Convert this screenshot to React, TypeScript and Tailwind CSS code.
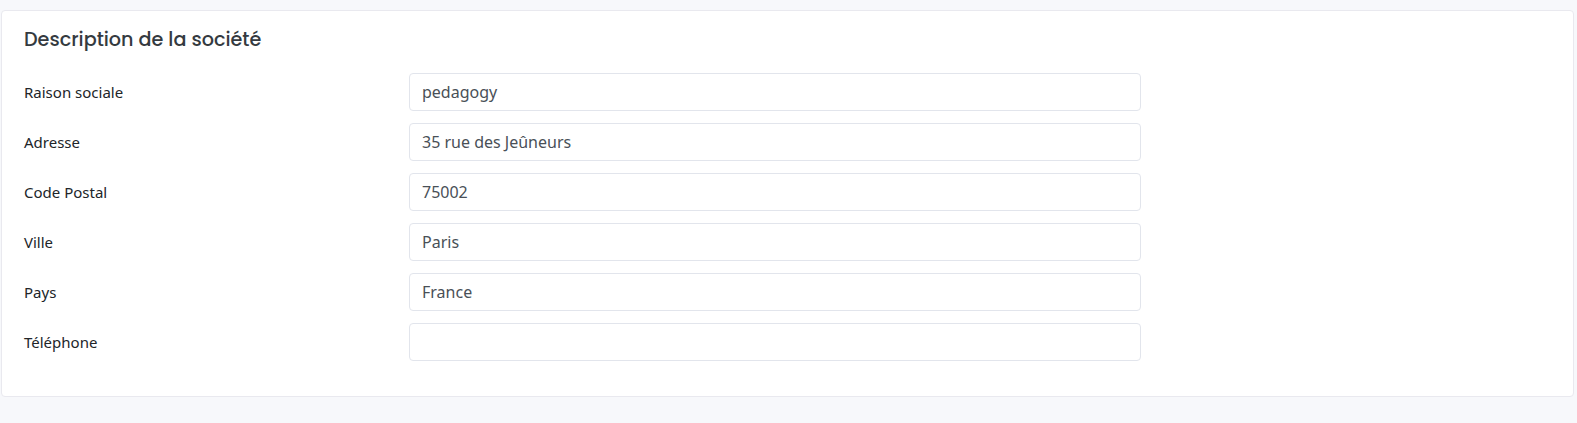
import React from "react";

const rows: [string, string][] = [
  ["Raison sociale", "pedagogy"],
  ["Adresse", "35 rue des Jeûneurs"],
  ["Code Postal", "75002"],
  ["Ville", "Paris"],
  ["Pays", "France"],
  ["Téléphone", ""],
];

export default function App() {
  return (
    <div className="w-[1577px] h-[423px] bg-[#f7f8fb] pt-[10px] pl-[1px] pr-[3px]">
      <div className="bg-white border border-[#e9e9ef] rounded-[4px] h-[387px] pl-[22px] pt-[15px]">
        <h4
          className="text-[19.2px] leading-[27px] font-medium text-[#343a40] mb-[20px]"
          style={{ fontFamily: "Poppins, 'Open Sans', sans-serif" }}
        >
          Description de la société
        </h4>
        <div className="flex flex-col gap-[12px]">
          {rows.map(([label, value]) => (
            <div key={label} className="flex items-center">
              <div
                className="w-[385px] text-[15px] text-[#212529]"
                style={{ fontFamily: "'Segoe UI', 'Noto Sans', sans-serif" }}
              >
                {label}
              </div>
              <div
                className="w-[732px] h-[38px] border border-[#e2e5ec] rounded-[4px] px-[12px] flex items-center text-[16px] text-[#495057]"
                style={{ fontFamily: "'Segoe UI', 'Noto Sans', sans-serif" }}
              >
                {value}
              </div>
            </div>
          ))}
        </div>
      </div>
    </div>
  );
}
